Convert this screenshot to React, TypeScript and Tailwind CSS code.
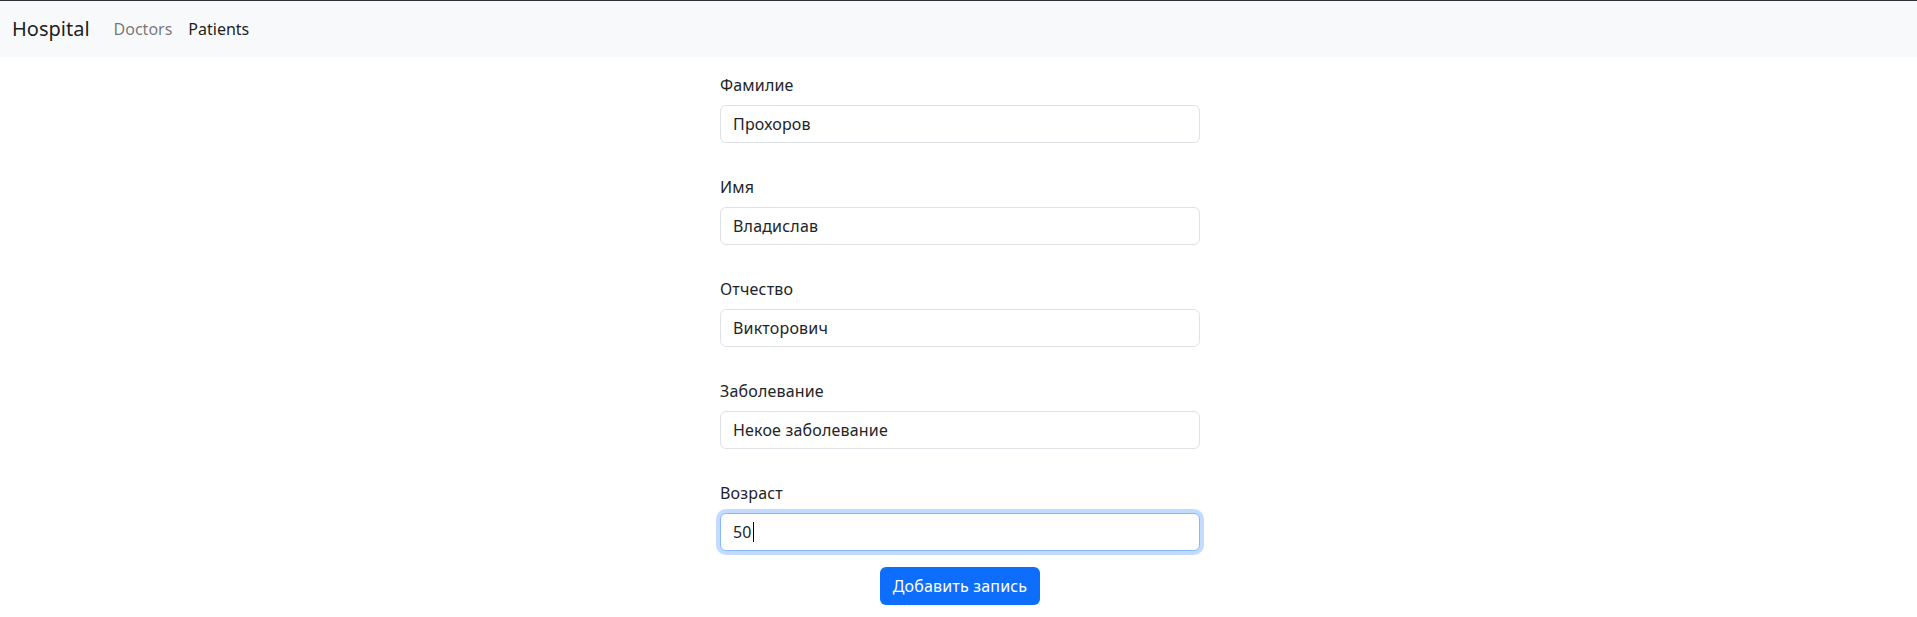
import React from "react";

const fields: { label: string; value: string }[] = [
  { label: "Фамилие", value: "Прохоров" },
  { label: "Имя", value: "Владислав" },
  { label: "Отчество", value: "Викторович" },
  { label: "Заболевание", value: "Некое заболевание" },
];

export default function App() {
  return (
    <div
      className="min-h-[617px] bg-white text-[#212529]"
      style={{ fontFamily: '"Noto Sans", "Open Sans", sans-serif' }}
    >
      <div className="h-px bg-[#2d3039]" />
      <nav className="flex h-[56px] items-center bg-[#f8f9fa] px-3">
        <a className="mr-4 py-[5px] text-[20px] leading-[30px] text-black/90">Hospital</a>
        <ul className="flex items-center">
          <li>
            <a className="block px-2 py-2 text-[16px] leading-6 text-black/55">Doctors</a>
          </li>
          <li>
            <a className="block px-2 py-2 text-[16px] leading-6 text-black/90">Patients</a>
          </li>
        </ul>
      </nav>
      <div className="flex justify-center pl-[3px] tracking-[0.18px]">
        <form className="flex w-[480px] flex-col pt-4">
          {fields.map((f) => (
            <div key={f.label} className="mb-8 flex flex-col">
              <label className="mb-2 text-[16px] leading-6">{f.label}</label>
              <input
                readOnly
                value={f.value}
                className="h-[38px] w-full rounded-[6px] border border-[#dee2e6] bg-white px-3 text-[16px] leading-6 tracking-[0.18px] text-[#212529] outline-none"
              />
            </div>
          ))}
          <div className="flex flex-col">
            <label className="mb-2 text-[16px] leading-6">Возраст</label>
            <div className="flex h-[38px] w-full items-center rounded-[6px] border border-[#86b7fe] bg-white px-3 text-[16px] leading-6 shadow-[0_0_0_4px_rgba(13,110,253,0.25)]">
              <span>50</span>
              <span className="ml-px inline-block h-[20px] w-px bg-black" />
            </div>
          </div>
          <div className="mt-4 flex justify-center">
            <button
              type="button"
              className="h-[38px] rounded-[6px] border border-transparent bg-[#0d6efd] px-3 text-[16px] leading-6 tracking-[0.18px] text-white"
            >
              Добавить запись
            </button>
          </div>
        </form>
      </div>
    </div>
  );
}
